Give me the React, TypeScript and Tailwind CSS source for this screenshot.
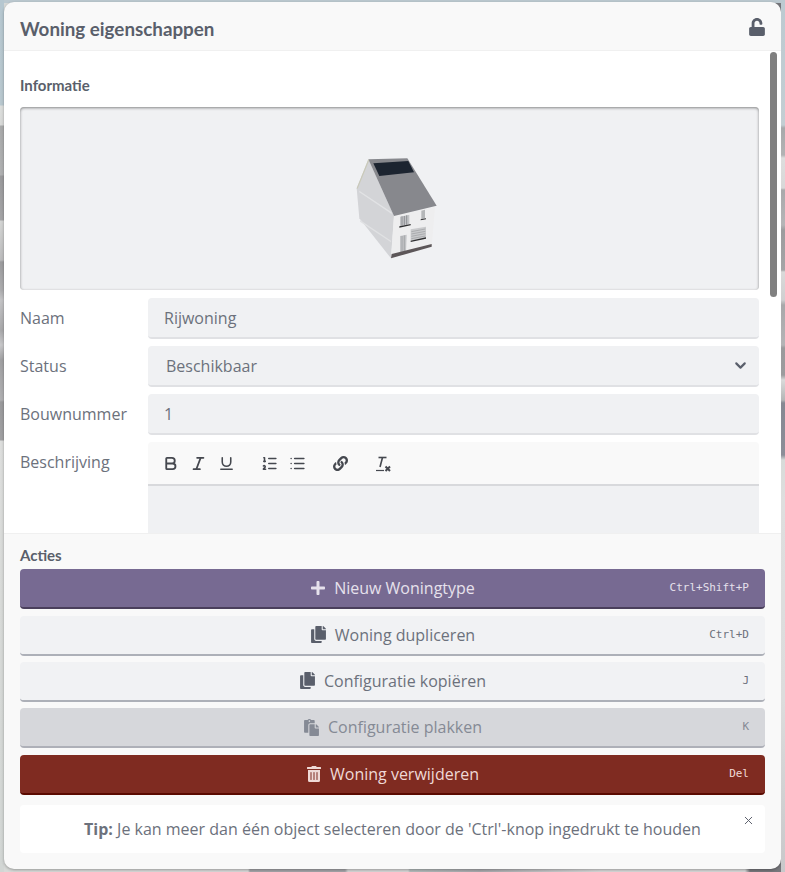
import { FaCopy, FaLink, FaPaste, FaPlus, FaTrashAlt, FaUnlock } from "react-icons/fa";
import { Bold, ChevronDown, Italic, List, ListOrdered, Underline, X } from "lucide-react";
import type { ReactNode } from "react";

const stripLeft =
  "bg-[linear-gradient(180deg,#b6c7d0_0px,#b9c8cf_105px,#dcdedc_106px,#d8d9d8_125px,#a9aaab_126px,#b0b1b2_175px,#9a9a9c_176px,#a4a4a6_220px,#d4d5d4_221px,#bcbcbd_260px,#9c9c9e_262px,#acacae_290px,#c4c4c6_300px,#a8a8aa_330px,#c8c8ca_345px,#a0a0a2_360px,#b0b0b2_400px,#9a9a9c_402px,#a0a0a2_440px,#dddedd_441px,#d8dad8_600px,#d2d6d4_872px)]";
const stripRight =
  "bg-[linear-gradient(180deg,#bccad1_0px,#c3ced3_125px,#a8a9ab_128px,#b2b3b4_155px,#dddddd_158px,#d8d8d8_188px,#a9a9ab_190px,#b5b5b7_225px,#9c9c9e_230px,#a4a4a6_270px,#d9d9d9_272px,#cfcfd0_300px,#a8a8aa_305px,#b4b4b6_345px,#9a9a9c_348px,#9c9c9e_375px,#dadada_380px,#b4b6b6_400px,#858892_403px,#8c8e98_455px,#d8dbd9_460px,#dedede_500px,#dcdcdc_700px,#c8c8ca_872px)]";
const backdrop =
  "bg-[linear-gradient(180deg,#bcc9d0_0px,#bcc9d0_3px,transparent_3px),linear-gradient(90deg,#d8dad8_0px,#d8d8d8_248px,#a4a4a8_250px,#a4a4a8_345px,#d6d6d6_348px,#d6d6d6_408px,#b4bcbc_410px,#a8a8ac_480px,#d8d8d8_600px,#d8d8d8_745px,#77777c_750px)]";

function House() {
  return (
    <svg viewBox="0 0 420 390" width={140} height={130} className="blur-[0.4px]">
      <polygon points="145,58 110,145 118,235 213,355 222,228" fill="#d3d4d7" />
      <polygon points="118,152 215,217 215,222 118,157" fill="#e2e3e5" />
      <polygon points="120,240 213,302 213,307 120,245" fill="#e0e1e3" />
      <polygon points="222,228 345,200 335,320 213,355" fill="#eeeeef" />
      <polygon points="145,58 262,55 350,197 222,228" fill="#87888d" />
      <polygon points="145,58 110,145 113,146 148,60" fill="#c9c9b8" />
      <polygon points="160,70 265,63 282,97 178,108" fill="#1c2430" />
      <polygon points="240,230 268,224 268,252 240,258" fill="#c2c3c6" />
      <path d="M246 229v28M253 228v28M260 226v28" stroke="#8e9094" strokeWidth={3} />
      <polygon points="304,212 315,209 315,235 304,238" fill="#b4b6b8" />
      <polygon points="238,259 272,252 272,256 238,263" fill="#2e2e30" />
      <polygon points="302,238 318,235 318,238 302,241" fill="#2e2e30" />
      <polygon points="272,268 318,260 318,295 272,303" fill="#c9cacc" />
      <path d="M274 275l42-8M274 282l42-8M274 289l42-8M274 296l42-8" stroke="#9a9b9e" strokeWidth={2} />
      <polygon points="272,302 318,292 318,296 272,306" fill="#2e2e30" />
      <polygon points="240,288 260,284 258,335 240,340" fill="#c2c3c6" />
      <path d="M246 288v50M253 286v50" stroke="#96989c" strokeWidth={2} />
      <polygon points="215,342 335,312 335,320 213,355" fill="#5c5658" />
    </svg>
  );
}

function ClearFormat() {
  return (
    <svg viewBox="0 0 16 16" width={16} height={16} fill="none" stroke="currentColor" strokeWidth={1.6}>
      <path d="M3.5 1.5h8" />
      <path d="M7.5 1.5 5 11" />
      <path d="M1 14.5h8" strokeWidth={1.2} />
      <path d="M10.5 10.5l4.5 4.5M15 10.5l-4.5 4.5" strokeWidth={2} />
    </svg>
  );
}

function FieldRow({ label, children }: { label: string; children: ReactNode }) {
  return (
    <div className="flex">
      <div className="w-[128px] shrink-0 h-[41px] pb-[2px] flex items-center text-[16px] text-[#6c717c]">{label}</div>
      {children}
    </div>
  );
}

function TextField({ value }: { value: string }) {
  return (
    <div className="grow h-[41px] flex items-center pl-[16px] bg-[#f0f1f3] rounded-[4px] border-b-2 border-[#e0e1e4] text-[16px] text-[#6c717c]">
      {value}
    </div>
  );
}

function ActionButton({ icon, label, shortcut, className }: {
  icon: ReactNode; label: string; shortcut: string; className: string;
}) {
  return (
    <div className={`relative h-[40px] flex items-center justify-center gap-[8px] rounded-[4px] border-b-2 text-[16px] ${className}`}>
      {icon}
      <span>{label}</span>
      <span className="absolute right-[16px] top-[11px] text-[11px]" style={{ fontFamily: '"DejaVu Sans Mono", monospace' }}>{shortcut}</span>
    </div>
  );
}

export default function App() {
  return (
    <div className={`w-[785px] h-[872px] overflow-hidden flex ${backdrop}`} style={{ fontFamily: '"Open Sans", sans-serif' }}>
      <div className={`w-[4px] shrink-0 ${stripLeft}`} />
      <div className="w-[777px] mt-[2px] mb-[3px] flex flex-col bg-[#f9f9f9] rounded-[10px] overflow-hidden shadow-[0_1px_3px_rgba(0,0,0,0.3)]">
        <div className="h-[49px] shrink-0 flex items-center justify-between pl-[16px] pr-[16px] border-b border-[#f0f0f0]">
          <span className="text-[18.8px] font-bold text-[#5a5f6b] pt-[6px]" style={{ fontFamily: 'Lato, sans-serif' }}>Woning eigenschappen</span>
          <FaUnlock className="text-[#5a5f6b] w-[16px] h-[18px] mt-[1px]" />
        </div>

        <div className="relative h-[482px] shrink-0 bg-white overflow-hidden">
          <div className="absolute right-[4px] top-[1px] w-[7px] h-[245px] rounded-full bg-[#808080]" />
          <div className="pl-[16px] pr-[22px] pt-[26px]">
            <div className="text-[15px] font-bold leading-[16px] text-[#5a5f6b]" style={{ fontFamily: 'Lato, sans-serif' }}>Informatie</div>
            <div className="mt-[14px] h-[183px] flex items-center justify-center pt-[13px] bg-[#f0f1f3] rounded-[4px] shadow-[inset_0_1px_3px_rgba(0,0,0,0.45)]">
              <House />
            </div>
            <div className="mt-[8px] flex flex-col gap-[7px]">
              <FieldRow label="Naam"><TextField value="Rijwoning" /></FieldRow>
              <FieldRow label="Status">
                <div className="grow h-[41px] flex items-center justify-between pl-[18px] pr-[10px] bg-[#f0f1f3] rounded-[4px] border-b-2 border-[#e0e1e4] text-[16px] text-[#6c717c]">
                  Beschikbaar
                  <ChevronDown size={17} strokeWidth={3} className="text-[#5a5f6b]" />
                </div>
              </FieldRow>
              <FieldRow label="Bouwnummer"><TextField value="1" /></FieldRow>
              <div className="flex">
                <div className="w-[128px] shrink-0 h-[41px] pb-[2px] flex items-center text-[16px] text-[#6c717c]">Beschrijving</div>
                <div className="grow flex flex-col">
                  <div className="h-[44px] flex items-center pl-[14px] pt-[1px] bg-[#f9f9f9] border-b-2 border-[#d8d9dc] text-[#45484f] rounded-t-[4px]">
                    <Bold size={17} strokeWidth={2.6} className="mr-[11px]" />
                    <Italic size={17} strokeWidth={2.4} className="mr-[11px]" />
                    <Underline size={17} strokeWidth={2.2} />
                    <ListOrdered size={17} strokeWidth={2.2} className="ml-[26px]" />
                    <List size={17} strokeWidth={2.2} className="ml-[11px]" />
                    <FaLink size={15} className="ml-[27px]" />
                    <span className="ml-[27px]"><ClearFormat /></span>
                  </div>
                  <div className="h-[60px] bg-[#f0f1f3]" />
                </div>
              </div>
            </div>
          </div>
        </div>

        <div className="grow border-t border-[#f0f0f0] pl-[16px] pr-[16px] pt-[13px] flex flex-col">
          <div className="text-[15px] font-bold leading-[16px] text-[#5a5f6b]" style={{ fontFamily: 'Lato, sans-serif' }}>Acties</div>
          <div className="mt-[6.3px] flex flex-col gap-[6.35px]">
            <ActionButton icon={<FaPlus size={16} />} label="Nieuw Woningtype" shortcut="Ctrl+Shift+P"
              className="bg-[#776a92] border-[#4a3f5c] text-[#e6e1ec]" />
            <ActionButton icon={<FaCopy size={17} className="text-[#5a5f6b]" />} label="Woning dupliceren" shortcut="Ctrl+D"
              className="bg-[#f1f2f4] border-[#adb0b8] text-[#6c717c]" />
            <ActionButton icon={<FaCopy size={17} className="text-[#5a5f6b]" />} label="Configuratie kopiëren" shortcut="J"
              className="bg-[#f1f2f4] border-[#adb0b8] text-[#6c717c]" />
            <ActionButton icon={<FaPaste size={17} />} label="Configuratie plakken" shortcut="K"
              className="bg-[#d6d7db] border-[#aeb0b8] text-[#858a95]" />
            <ActionButton icon={<FaTrashAlt size={16} />} label="Woning verwijderen" shortcut="Del"
              className="bg-[#7f2b21] border-[#5a0a00] text-[#efd9d6]" />
          </div>
          <div className="relative mt-[10px] h-[48px] flex items-center justify-center bg-white rounded-[4px] text-[16px] text-[#6c717c]">
            <span><b className="font-bold">Tip:</b> Je kan meer dan één object selecteren door de 'Ctrl'-knop ingedrukt te houden</span>
            <X size={13} strokeWidth={1.8} className="absolute right-[10px] top-[9px] text-[#5a5f6b]" />
          </div>
        </div>
      </div>
      <div className={`w-[4px] shrink-0 ${stripRight}`} />
    </div>
  );
}
